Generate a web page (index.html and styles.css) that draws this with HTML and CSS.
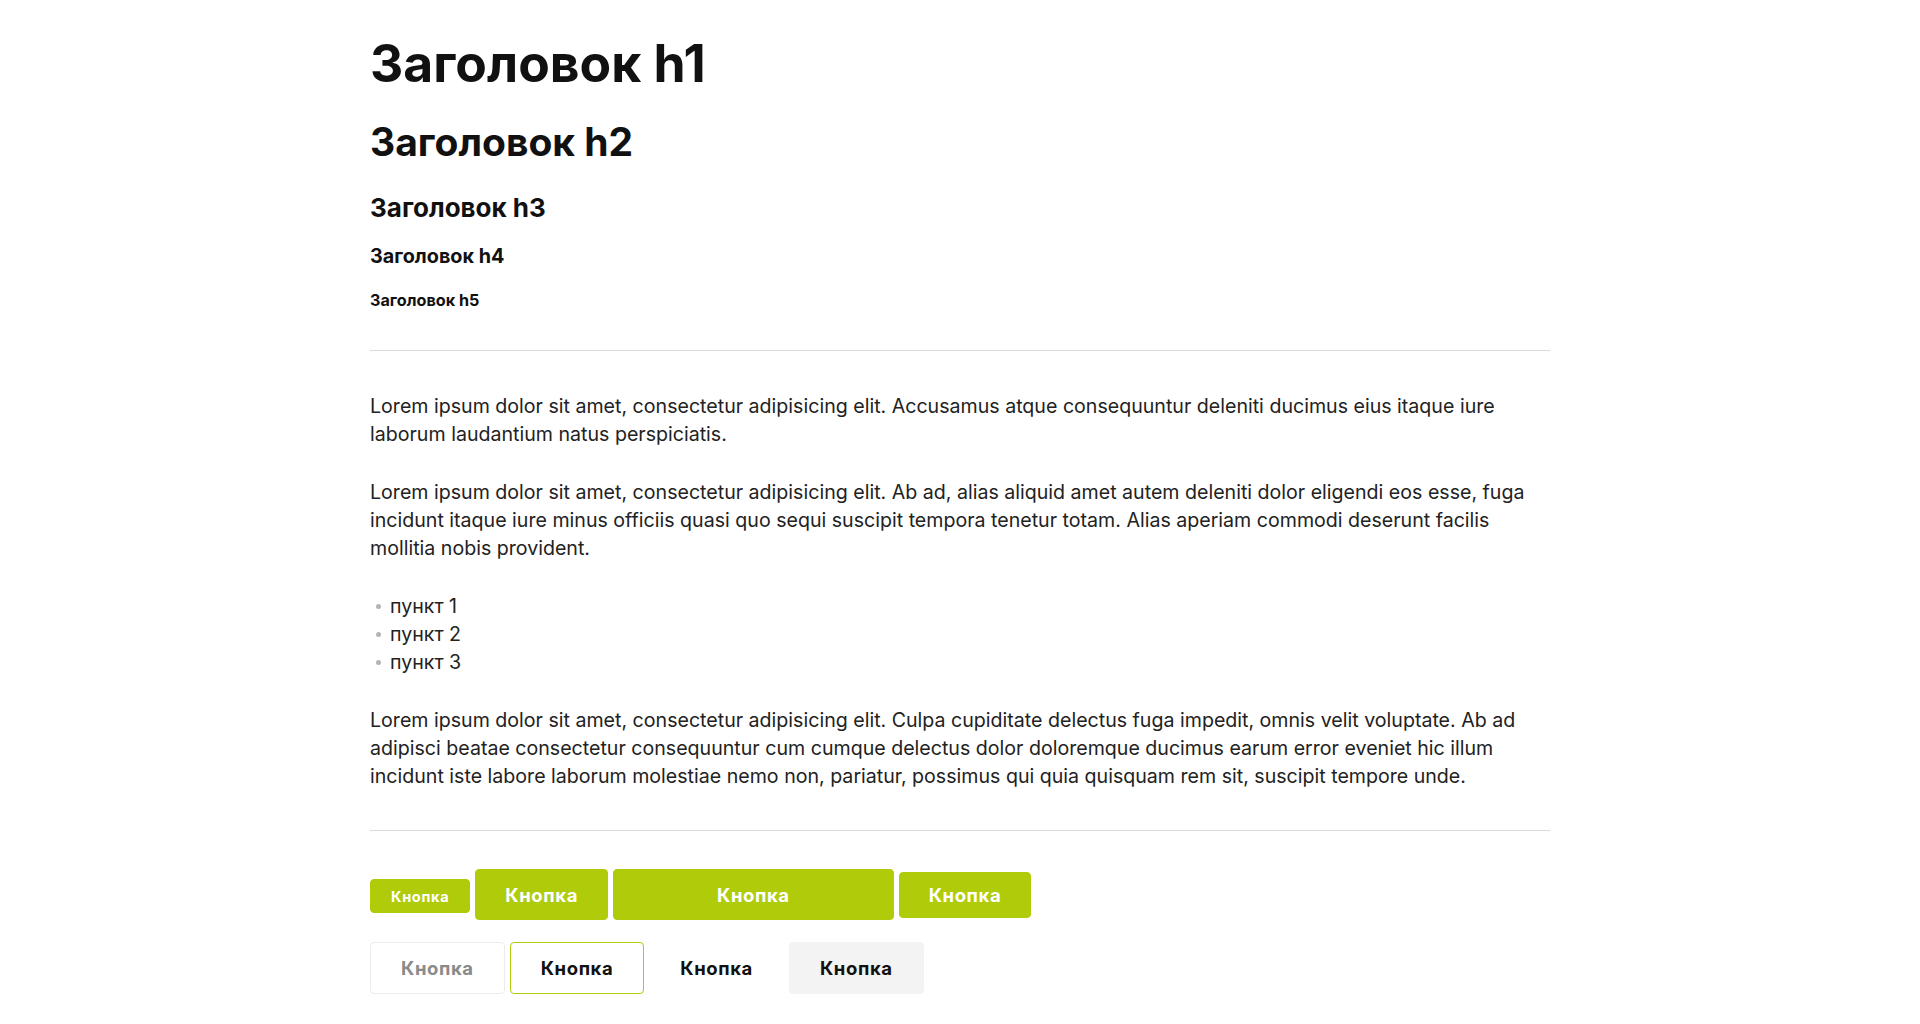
FILE: index.html
```html
<!DOCTYPE html>
<html lang="ru">
<head>
<meta charset="utf-8">
<title>Типографика</title>
<link rel="stylesheet" href="styles.css">
</head>
<body>
<main class="page">
  <h1 class="h1">Заголовок h1</h1>
  <h2 class="h2">Заголовок h2</h2>
  <h3 class="h3">Заголовок h3</h3>
  <h4 class="h4">Заголовок h4</h4>
  <h5 class="h5">Заголовок h5</h5>
  <hr class="divider">
  <p class="text">Lorem ipsum dolor sit amet, consectetur adipisicing elit. Accusamus atque consequuntur deleniti ducimus eius itaque iure laborum laudantium natus perspiciatis.</p>
  <p class="text">Lorem ipsum dolor sit amet, consectetur adipisicing elit. Ab ad, alias aliquid amet autem deleniti dolor eligendi eos esse, fuga incidunt itaque iure minus officiis quasi quo sequi suscipit tempora tenetur totam. Alias aperiam commodi deserunt facilis mollitia nobis provident.</p>
  <ul class="list">
    <li class="list__item">пункт 1</li>
    <li class="list__item">пункт 2</li>
    <li class="list__item">пункт 3</li>
  </ul>
  <p class="text">Lorem ipsum dolor sit amet, consectetur adipisicing elit. Culpa cupiditate delectus fuga impedit, omnis velit voluptate. Ab ad adipisci beatae consectetur consequuntur cum cumque delectus dolor doloremque ducimus earum error eveniet hic illum incidunt iste labore laborum molestiae nemo non, pariatur, possimus qui quia quisquam rem sit, suscipit tempore unde.</p>
  <hr class="divider divider--end">
  <div class="btn-row">
    <a class="btn btn--primary btn--sm">Кнопка</a>
    <a class="btn btn--primary btn--lg">Кнопка</a>
    <a class="btn btn--primary btn--lg btn--wide">Кнопка</a>
    <a class="btn btn--primary btn--md">Кнопка</a>
  </div>
  <div class="btn-row">
    <a class="btn btn--disabled">Кнопка</a>
    <a class="btn btn--outline">Кнопка</a>
    <a class="btn btn--ghost">Кнопка</a>
    <a class="btn btn--light">Кнопка</a>
  </div>
</main>
</body>
</html>
```
FILE: styles.css
```css
* { box-sizing: border-box; }
body {
  margin: 0;
  background: #fff;
  color: #1b1b1b;
  font-family: "Inter", "Open Sans", sans-serif;
}
.page {
  width: 1180px;
  margin: 0 auto;
  padding-top: 32px;
}
.h1, .h2, .h3, .h4, .h5 {
  margin: 0;
  font-weight: 700;
  color: #111;
}
.h1 { font-size: 51.6px; line-height: 62px; margin-bottom: 24px; }
.h2 { font-size: 39px; line-height: 48px; margin-bottom: 26px; }
.h3 { font-size: 26px; line-height: 32px; margin-bottom: 20px; }
.h4 { font-size: 19.8px; line-height: 24px; margin-bottom: 22px; }
.h5 { font-size: 16.2px; line-height: 20px; }
.divider {
  margin: 40px 0 41px;
  border: 0;
  border-top: 1px solid #d9d9d9;
}
.divider--end { margin-bottom: 38px; }
.text {
  margin: 0 0 30px;
  font-size: 19.6px;
  line-height: 28px;
  color: #222;
}
.list {
  margin: 0 0 30px;
  padding: 0;
  list-style: none;
  font-size: 19.6px;
  line-height: 28px;
  color: #222;
}
.list__item {
  display: flex;
  align-items: center;
  gap: 9px;
}
.list__item::before {
  content: "";
  width: 5px;
  height: 5px;
  margin-left: 6px;
  border-radius: 50%;
  background: #b5b5b5;
}
.btn-row {
  display: flex;
  align-items: center;
  gap: 5px;
  margin-bottom: 22px;
}
.btn {
  display: inline-flex;
  align-items: center;
  justify-content: center;
  height: 52px;
  padding: 0 30px;
  border: 1px solid transparent;
  border-radius: 4px;
  font-size: 18.5px;
  font-weight: 700;
  letter-spacing: 0.6px;
  color: #111;
  text-decoration: none;
  cursor: pointer;
}
.btn--primary { padding: 0 29px; background: #b0cb0a; border-color: #b0cb0a; color: #fff; }
.btn--sm { height: 34px; margin-top: 3px; padding: 0 20px; font-size: 14.5px; letter-spacing: 0.7px; }
.btn--lg { height: 51px; }
.btn--md { height: 46px; }
.btn--wide { padding: 0 103px; }
.btn--disabled { border-color: #ececec; color: #8a8a8a; }
.btn--outline { border-color: #b0cb0a; }
.btn--light { background: #f3f3f3; border-color: #f3f3f3; }
```
